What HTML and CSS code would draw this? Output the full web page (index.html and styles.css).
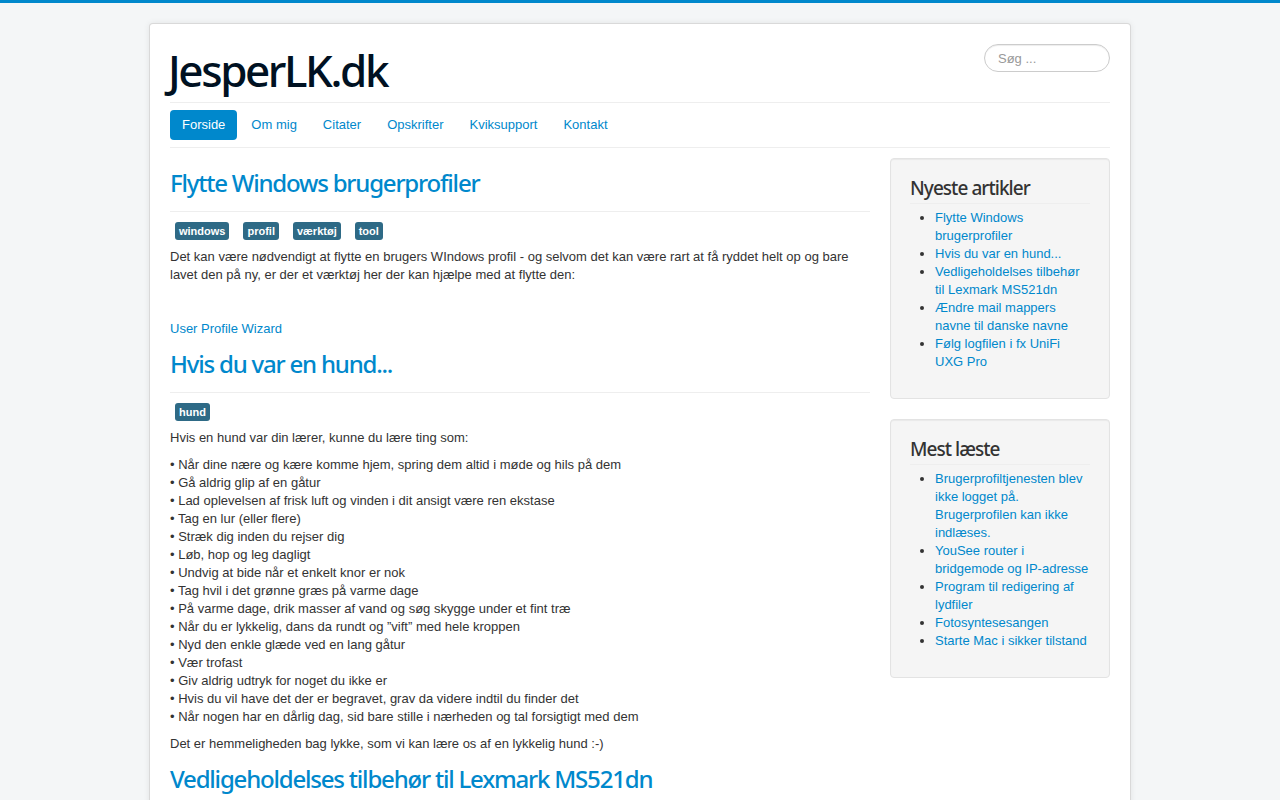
FILE: index.html
```html
<!DOCTYPE html>
<html lang="da">
<head>
    <meta charset="UTF-8">
    <meta name="viewport" content="width=device-width, initial-scale=1.0">
    <title>JesperLK.dk</title>
    <link rel="stylesheet" href="styles.css">
</head>
<body>

<div class="container">
    <header class="header">
        <a class="brand" href="#">JesperLK.dk</a>
        <input type="text" class="search" placeholder="Søg ...">
    </header>

    <nav class="navigation">
        <ul class="nav-pills">
            <li><a class="active" href="#">Forside</a></li>
            <li><a href="#">Om mig</a></li>
            <li><a href="#">Citater</a></li>
            <li><a href="#">Opskrifter</a></li>
            <li><a href="#">Kviksupport</a></li>
            <li><a href="#">Kontakt</a></li>
        </ul>
    </nav>

    <div class="row">
        <main class="content">
            <div class="item">
                <div class="page-header">
                    <h2><a href="#">Flytte Windows brugerprofiler</a></h2>
                </div>
                <ul class="tags">
                    <li><span class="label">windows</span></li>
                    <li><span class="label">profil</span></li>
                    <li><span class="label">værktøj</span></li>
                    <li><span class="label">tool</span></li>
                </ul>
                <p>Det kan være nødvendigt at flytte en brugers WIndows profil - og selvom det kan være rart at få ryddet helt op og bare lavet den på ny, er der et værktøj her der kan hjælpe med at flytte den:</p>
                <p>&nbsp;</p>
                <p><a href="#">User Profile Wizard</a></p>
            </div>

            <div class="item">
                <div class="page-header">
                    <h2><a href="#">Hvis du var en hund...</a></h2>
                </div>
                <ul class="tags">
                    <li><span class="label">hund</span></li>
                </ul>
                <p>Hvis en hund var din lærer, kunne du lære ting som:</p>
                <p>• Når dine nære og kære komme hjem, spring dem altid i møde og hils på dem<br>
                • Gå aldrig glip af en gåtur<br>
                • Lad oplevelsen af frisk luft og vinden i dit ansigt være ren ekstase<br>
                • Tag en lur (eller flere)<br>
                • Stræk dig inden du rejser dig<br>
                • Løb, hop og leg dagligt<br>
                • Undvig at bide når et enkelt knor er nok<br>
                • Tag hvil i det grønne græs på varme dage<br>
                • På varme dage, drik masser af vand og søg skygge under et fint træ<br>
                • Når du er lykkelig, dans da rundt og ”vift” med hele kroppen<br>
                • Nyd den enkle glæde ved en lang gåtur<br>
                • Vær trofast<br>
                • Giv aldrig udtryk for noget du ikke er<br>
                • Hvis du vil have det der er begravet, grav da videre indtil du finder det<br>
                • Når nogen har en dårlig dag, sid bare stille i nærheden og tal forsigtigt med dem</p>
                <p>Det er hemmeligheden bag lykke, som vi kan lære os af en lykkelig hund :-)</p>
            </div>

            <div class="item">
                <div class="page-header">
                    <h2><a href="#">Vedligeholdelses tilbehør til Lexmark MS521dn</a></h2>
                </div>
            </div>
        </main>

        <aside class="sidebar">
            <div class="well">
                <h3 class="page-header">Nyeste artikler</h3>
                <ul>
                    <li><a href="#">Flytte Windows brugerprofiler</a></li>
                    <li><a href="#">Hvis du var en hund...</a></li>
                    <li><a href="#">Vedligeholdelses tilbehør til Lexmark MS521dn</a></li>
                    <li><a href="#">Ændre mail mappers navne til danske navne</a></li>
                    <li><a href="#">Følg logfilen i fx UniFi UXG Pro</a></li>
                </ul>
            </div>
            <div class="well">
                <h3 class="page-header">Mest læste</h3>
                <ul>
                    <li><a href="#">Brugerprofiltjenesten blev ikke logget på. Brugerprofilen kan ikke indlæses.</a></li>
                    <li><a href="#">YouSee router i bridgemode og IP-adresse</a></li>
                    <li><a href="#">Program til redigering af lydfiler</a></li>
                    <li><a href="#">Fotosyntesesangen</a></li>
                    <li><a href="#">Starte Mac i sikker tilstand</a></li>
                </ul>
            </div>
        </aside>
    </div>
</div>

</body>
</html>
```

FILE: styles.css
```css
body {
    margin: 0;
    padding: 20px 0;
    font-family: "Liberation Sans", Helvetica, Arial, sans-serif;
    font-size: 13px;
    line-height: 18px;
    color: #333;
    background-color: #f4f6f7;
    border-top: 3px solid #0088cc;
}

a {
    color: #0088cc;
    text-decoration: none;
}

p {
    margin: 0 0 9px;
}

.container {
    width: 940px;
    margin: 0 auto;
    padding: 20px;
    background-color: #fff;
    border: 1px solid rgba(0, 0, 0, 0.15);
    border-radius: 4px;
    box-shadow: 0 0 6px rgba(0, 0, 0, 0.075);
}

.header {
    display: flex;
    justify-content: space-between;
    align-items: flex-start;
    padding-bottom: 6px;
    border-bottom: 1px solid #eee;
}

.brand {
    font-family: "Noto Sans", sans-serif;
    font-size: 44px;
    line-height: 52px;
    font-weight: 500;
    letter-spacing: -0.055em;
    color: #001122;
    margin-left: -2px;
}

.search {
    width: 98px;
    height: 18px;
    padding: 4px 13px;
    border: 1px solid #ccc;
    border-radius: 14px;
    font-family: "Liberation Sans", Helvetica, Arial, sans-serif;
    font-size: 13px;
    color: #555;
    box-shadow: inset 0 1px 1px rgba(0, 0, 0, 0.075);
}

.search::placeholder {
    color: #999;
}

.navigation {
    padding: 7px 0;
    border-bottom: 1px solid #eee;
}

.nav-pills {
    display: flex;
    gap: 2px;
    list-style: none;
    margin: 0;
    padding: 0;
}

.nav-pills a {
    display: block;
    padding: 6px 12px;
    border-radius: 4px;
}

.nav-pills a.active {
    background-color: #0088cc;
    color: #fff;
}

.row {
    display: flex;
    gap: 20px;
    margin-top: 10px;
}

.content {
    width: 700px;
    padding-top: 8px;
}

.sidebar {
    width: 220px;
}

.page-header {
    padding-bottom: 11px;
    margin: 0 0 10px;
    border-bottom: 1px solid #eee;
}

.item h2 {
    margin: 0;
    font-family: "Noto Sans", sans-serif;
    font-size: 24px;
    line-height: 34px;
    font-weight: 500;
    letter-spacing: -0.05em;
}

.tags {
    display: flex;
    gap: 14px;
    list-style: none;
    margin: 0 0 8px;
    padding: 0 0 0 5px;
}

.label {
    display: block;
    padding: 2px 4px;
    font-size: 11px;
    line-height: 14px;
    font-weight: bold;
    color: #fff;
    background-color: #2e6a86;
    border-radius: 3px;
}

.well {
    padding: 19px;
    margin-bottom: 20px;
    background-color: #f5f5f5;
    border: 1px solid #e3e3e3;
    border-radius: 4px;
    box-shadow: inset 0 1px 1px rgba(0, 0, 0, 0.05);
}

.well h3 {
    font-family: "Noto Sans", sans-serif;
    font-size: 19px;
    line-height: 21px;
    font-weight: 500;
    letter-spacing: -0.05em;
    color: #333;
    padding-bottom: 4px;
    margin: 0 0 5px;
}

.well ul {
    margin: 0 0 8px 25px;
    padding: 0;
}
```
